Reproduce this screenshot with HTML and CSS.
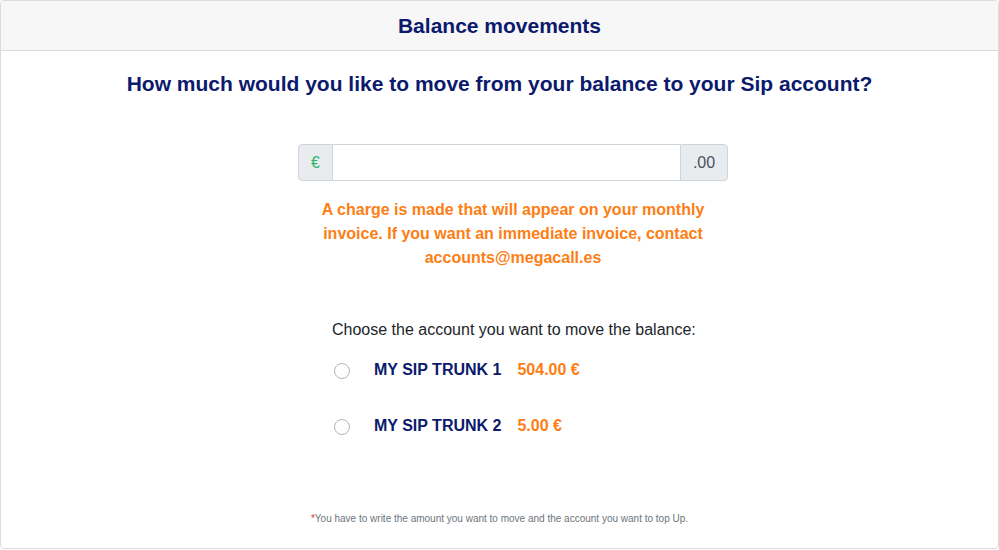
FILE: index.html
```html
<!DOCTYPE html>
<html>
<head>
<meta charset="utf-8">
<link rel="stylesheet" href="styles.css">
</head>
<body>
<div class="card">
  <div class="card-header">Balance movements</div>
  <div class="card-body">
    <h2 class="question">How much would you like to move from your balance to your Sip account?</h2>
    <div class="column">
      <div class="input-group">
        <span class="addon addon-left">€</span>
        <input class="amount" type="text">
        <span class="addon addon-right">.00</span>
      </div>
      <p class="notice">A charge is made that will appear on your monthly invoice. If you want an immediate invoice, contact accounts@megacall.es</p>
      <div class="accounts">
        <p class="choose">Choose the account you want to move the balance:</p>
        <label class="account">
          <span class="radio"></span>
          <span class="acc-name">MY SIP TRUNK 1</span>
          <span class="acc-amount">504.00 €</span>
        </label>
        <label class="account">
          <span class="radio"></span>
          <span class="acc-name">MY SIP TRUNK 2</span>
          <span class="acc-amount">5.00 €</span>
        </label>
      </div>
    </div>
    <p class="footnote"><span class="star">*</span>You have to write the amount you want to move and the account you want to top Up.</p>
  </div>
</div>
</body>
</html>
```
FILE: styles.css
```css
html, body {
  margin: 0;
  padding: 0;
  background: #fff;
}
body {
  font-family: "Liberation Sans", Arial, sans-serif;
  color: #212529;
}
.card {
  width: 999px;
  height: 549px;
  box-sizing: border-box;
  border: 1px solid #dcdcdc;
  border-radius: 4px;
  display: flex;
  flex-direction: column;
  overflow: hidden;
}
.card-header {
  height: 50px;
  flex: none;
  box-sizing: border-box;
  background: #f7f7f7;
  border-bottom: 1px solid #dcdcdc;
  display: flex;
  align-items: center;
  justify-content: center;
  font-size: 21px;
  font-weight: bold;
  color: #0b1a6c;
}
.card-body {
  flex: 1;
  display: flex;
  flex-direction: column;
  align-items: center;
}
.question {
  margin: 21px 0 0;
  font-size: 21px;
  line-height: 24px;
  font-weight: bold;
  color: #0b1a6c;
}
.column {
  display: flex;
  flex-direction: column;
  align-items: center;
  padding-left: 27px;
}
.input-group {
  margin-top: 48px;
  width: 430px;
  height: 37px;
  display: flex;
  box-sizing: border-box;
}
.addon {
  background: #e9ecef;
  border: 1px solid #ced4da;
  display: flex;
  align-items: center;
  justify-content: center;
  font-size: 16px;
  color: #495057;
  box-sizing: border-box;
}
.addon-left {
  width: 35px;
  border-radius: 4px 0 0 4px;
  color: #2bb56a;
}
.addon-right {
  width: 48px;
  border-radius: 0 4px 4px 0;
}
.amount {
  flex: 1;
  min-width: 0;
  border: 1px solid #ced4da;
  border-left: none;
  border-right: none;
  margin: 0;
  padding: 0 12px;
  font: inherit;
  outline: none;
}
.notice {
  width: 430px;
  margin: 17px 0 0;
  text-align: center;
  font-size: 16px;
  line-height: 24px;
  font-weight: bold;
  color: #fd7e14;
}
.accounts {
  width: 430px;
  box-sizing: border-box;
  padding-left: 34px;
  margin-top: 48px;
  display: flex;
  flex-direction: column;
}
.choose {
  margin: 0;
  font-size: 16px;
  line-height: 24px;
  color: #212529;
}
.account {
  display: flex;
  align-items: center;
  height: 24px;
  margin-top: 16px;
  font-size: 16px;
  font-weight: bold;
}
.account + .account {
  margin-top: 32px;
}
.radio {
  width: 16px;
  height: 16px;
  box-sizing: border-box;
  border: 1px solid #b5b5b5;
  border-radius: 50%;
  margin-left: 2px;
  margin-right: 24px;
  margin-top: 2px;
  background: #fff;
}
.acc-name {
  color: #0b1a6c;
}
.acc-amount {
  color: #fd7e14;
  margin-left: 16px;
}
.footnote {
  margin: auto 0 22px;
  font-size: 10px;
  line-height: 14px;
  color: #6c757d;
}
.star {
  color: #dc3545;
}
```
